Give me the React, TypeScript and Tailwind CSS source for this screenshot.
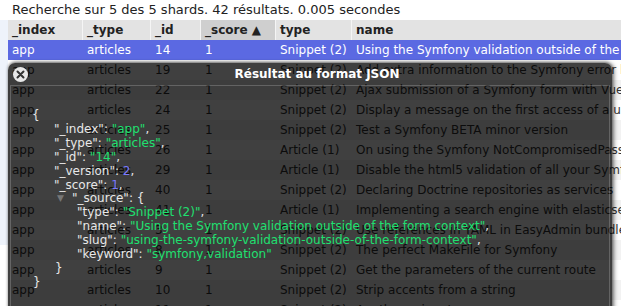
import React from "react";

const rows: [string, string, string, string, string, string][] = [
  ["app", "articles", "14", "1", "Snippet (2)", "Using the Symfony validation outside of the form context"],
  ["app", "articles", "19", "1", "Snippet (2)", "Add extra information to the Symfony error logs"],
  ["app", "articles", "22", "1", "Snippet (2)", "Ajax submission of a Symfony form with Vue.js"],
  ["app", "articles", "24", "1", "Snippet (2)", "Display a message on the first access of a user"],
  ["app", "articles", "25", "1", "Snippet (2)", "Test a Symfony BETA minor version"],
  ["app", "articles", "26", "1", "Article (1)", "On using the Symfony NotCompromisedPassword validator"],
  ["app", "articles", "29", "1", "Article (1)", "Disable the html5 validation of all your Symfony forms"],
  ["app", "articles", "40", "1", "Snippet (2)", "Declaring Doctrine repositories as services"],
  ["app", "articles", "41", "1", "Article (1)", "Implementing a search engine with elasticsearch"],
  ["app", "articles", "3", "1", "Snippet (2)", "Use references in YAML in EasyAdmin bundle"],
  ["app", "articles", "8", "1", "Snippet (2)", "The perfect MakeFile for Symfony"],
  ["app", "articles", "9", "1", "Snippet (2)", "Get the parameters of the current route"],
  ["app", "articles", "10", "1", "Snippet (2)", "Strip accents from a string"],
  ["app", "articles", "11", "1", "Snippet (2)", "Another snippet"],
];

const widths = ["w-[75px]", "w-[68px]", "w-[50px]", "w-[75px]", "w-[76px]", "flex-1"];

function K({ children }: { children: React.ReactNode }) {
  return <span className="text-[#e8e8e8]">{children}</span>;
}
function S({ children }: { children: React.ReactNode }) {
  return <span className="text-[#1fe070]">{children}</span>;
}
function N({ children }: { children: React.ReactNode }) {
  return <span className="text-[#7a7aff]">{children}</span>;
}

export default function App() {
  return (
    <div
      className="relative w-[621px] h-[306px] overflow-hidden bg-white text-[12px] text-[#333]"
      style={{ fontFamily: '"DejaVu Sans", Verdana, sans-serif' }}
    >
      <div className="h-5 leading-5 pl-3 text-[13px] text-[#222] whitespace-nowrap">
        Recherche sur 5 des 5 shards. 42 résultats. 0.005 secondes
      </div>
      <div className="flex">
        <div className="w-2 h-[225px] bg-[#eef3fb] shrink-0" />
        <div className="flex-1 flex flex-col min-w-0">
          <div className="flex h-5 leading-5 bg-[#e3e3e3] font-bold text-[#222] whitespace-nowrap">
            <div className="w-[75px] pl-1 border-r border-[#f5f5f5]">_index</div>
            <div className="w-[68px] pl-1 border-r border-[#f5f5f5]">_type</div>
            <div className="w-[50px] pl-1 border-r border-[#f5f5f5]">_id</div>
            <div className="w-[75px] pl-1 border-r border-[#f5f5f5] bg-[#cfcfcf]">_score ▲</div>
            <div className="w-[76px] pl-1 border-r border-[#f5f5f5]">type</div>
            <div className="flex-1 pl-1">name</div>
          </div>
          {rows.map((r, i) => (
            <div
              key={i}
              className={
                "flex h-5 leading-5 whitespace-nowrap " +
                (i === 0 ? "bg-[#5b69e2] text-white" : i % 2 === 0 ? "bg-[#f2f2f2]" : "bg-white")
              }
            >
              {r.map((c, j) => (
                <div key={j} className={widths[j] + " pl-1 overflow-hidden"}>
                  {c}
                </div>
              ))}
            </div>
          ))}
        </div>
      </div>

      <div className="absolute left-[8px] top-[63px] w-[604px] h-[270px] bg-black/75 rounded-t-[7px] shadow-[2px_0_4px_rgba(0,0,0,0.5),0_-1px_3px_rgba(0,0,0,0.4)]">
        <div className="relative h-[22px] flex items-center justify-center">
          <div className="absolute left-[5px] top-[4px] w-[15px] h-[15px] rounded-full bg-[#e8e8e8] flex items-center justify-center">
            <svg width="9" height="9" viewBox="0 0 9 9">
              <path d="M1.5 1.5 L7.5 7.5 M7.5 1.5 L1.5 7.5" stroke="#333" strokeWidth="2" strokeLinecap="round" />
            </svg>
          </div>
          <span className="font-bold text-white text-[12px] ml-[14px]">Résultat au format JSON</span>
        </div>
        <div className="mx-[2px] h-[240px] border border-white/20 relative">
          <div className="absolute left-[21px] top-[23px] leading-[13.9px] text-[12px] whitespace-pre text-[#e8e8e8]">
            <div>{"{"}</div>
            <div className="pl-[22px]">
              <K>"_index"</K>: <S>"app"</S>,
            </div>
            <div className="pl-[22px]">
              <K>"_type"</K>: <S>"articles"</S>,
            </div>
            <div className="pl-[22px]">
              <K>"_id"</K>: <S>"14"</S>,
            </div>
            <div className="pl-[22px]">
              <K>"_version"</K>: <N>2</N>,
            </div>
            <div className="pl-[22px]">
              <K>"_score"</K>: <N>1</N>,
            </div>
            <div className="pl-[25px] flex items-center">
              <span className="text-[#777] text-[9px] w-[15px]">▼</span>
              <span>
                <K>"_source"</K>: {"{"}
              </span>
            </div>
            <div className="pl-[45px]">
              <K>"type"</K>: <S>"Snippet (2)"</S>,
            </div>
            <div className="pl-[45px]">
              <K>"name"</K>: <S>"Using the Symfony validation outside of the form context"</S>,
            </div>
            <div className="pl-[45px]">
              <K>"slug"</K>: <S>"using-the-symfony-validation-outside-of-the-form-context"</S>,
            </div>
            <div className="pl-[45px]">
              <K>"keyword"</K>: <S>"symfony,validation"</S>
            </div>
            <div className="pl-[23px]">{"}"}</div>
            <div className="pl-[1px]">{"}"}</div>
          </div>
        </div>
      </div>
    </div>
  );
}
